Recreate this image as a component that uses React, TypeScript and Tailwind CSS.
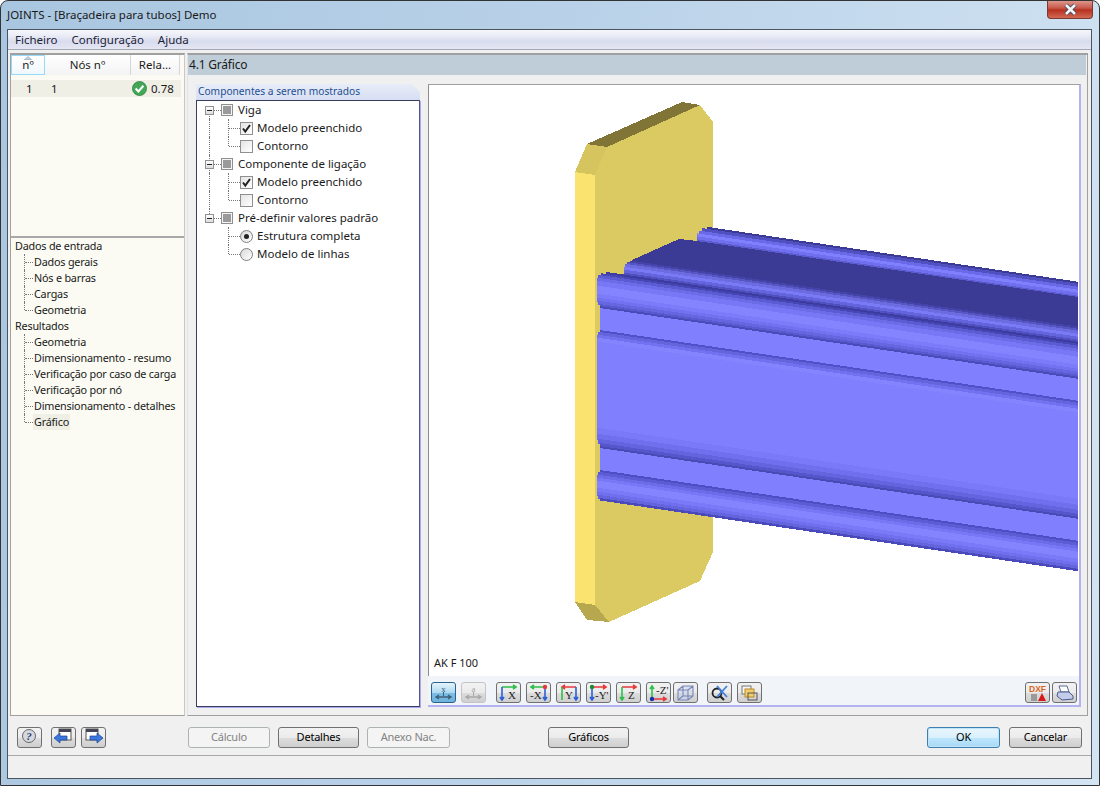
import type { ReactNode } from "react";

const font = "font-['Noto_Sans',sans-serif]";

// beam section: x where band starts, y at x=600 top/bottom, colour
const slope = 0.148;
const beamEnd = 1078;
const bands: [number, number, number, string][] = [
  [707, 211, 213, "#3b3b96"],
  [702, 213, 216, "#5050c0"],
  [699, 216, 219, "#6a6ae8"],
  [697, 219, 222, "#8080ff"],
  [697, 222, 225, "#7070ee"],
  [697, 225, 227, "#5c5cd0"],
  [630, 256, 258, "#4444a8"],
  [627, 258, 260, "#5656c4"],
  [625, 260, 263, "#6c6ce0"],
  [624, 263, 266, "#7a7af6"],
  [624, 266, 269, "#6464dc"],
  [624, 269, 271, "#5050c0"],
  [606, 271, 273, "#3c3ca0"],
  [601, 273, 275, "#4646b4"],
  [598, 275, 278, "#5c5cd2"],
  [597, 278, 281, "#6c6ce8"],
  [597, 281, 286, "#7878f6"],
  [597, 286, 294, "#8484ff"],
  [597, 294, 298, "#7c7cfa"],
  [597, 298, 301, "#7272f0"],
  [598, 301, 304, "#6666e0"],
  [600, 304, 306, "#5a5ad0"],
  [600, 306, 308, "#4a4ab8"],
  [600, 308, 330, "#8080ff"],
  [600, 330, 332, "#5050c8"],
  [598, 332, 335, "#6464dc"],
  [597, 335, 338, "#7272f0"],
  [597, 338, 342, "#8484ff"],
  [597, 342, 428, "#8080ff"],
  [597, 428, 434, "#7a7af8"],
  [597, 434, 439, "#7070ee"],
  [598, 439, 443, "#6464de"],
  [600, 443, 446, "#5656cc"],
  [600, 446, 448, "#4a4ab4"],
  [600, 448, 470, "#8080ff"],
  [600, 470, 472, "#4e4ec4"],
  [598, 472, 475, "#5c5cd4"],
  [597, 475, 478, "#6c6ce8"],
  [597, 478, 481, "#7878f6"],
  [597, 481, 488, "#8484ff"],
  [597, 488, 492, "#7a7af8"],
  [597, 492, 495, "#7070ee"],
  [598, 495, 498, "#6464dc"],
  [600, 498, 500.5, "#4a4abc"],
];

function Model() {
  return (
    <svg viewBox="429 85 650 591" className="absolute inset-0 w-full h-full" shapeRendering="crispEdges">
      <polygon points="575,172 595,175 595,605 575,602" fill="#fae36f" />
      <polygon points="575,172 587,144 607,147 595,175" fill="#d6c55e" />
      <polygon points="587,144 682,102 700,105 607,147" fill="#807536" />
      <polygon points="595,175 607,147 700,105 713,122 713,552 700,581 609,622 595,605" fill="#dbc962" />
      <polygon points="575,602 587,620 609,622 595,605" fill="#b7a84f" />
      <polygon points="632,260 679,239 697,241 1078,297 1078,335 632,270" fill="#3b3b96" />
      {bands.map(([x, a, b, c], i) => {
        const bottom = i < bands.length - 1 ? b + 1 : b;
        const run = beamEnd - 600;
        return (
          <polygon
            key={i}
            fill={c}
            points={`${x},${a + (x - 600) * slope} ${beamEnd},${a + run * slope} ${beamEnd},${bottom + run * slope} ${x},${bottom + (x - 600) * slope}`}
          />
        );
      })}
      <polygon points="697,241 1078,297 1078,325.5 632,260 679,239" fill="#3b3b96" />
    </svg>
  );
}

function Arrow({ d, c }: { d: string; c: string }) {
  return <path d={d} stroke={c} strokeWidth="1.6" fill="none" />;
}

function Letter({ x, y, t }: { x: number; y: number; t: string }) {
  return (
    <text x={x} y={y} fontSize="11" fontFamily="'Liberation Serif',serif" fill="#222">
      {t}
    </text>
  );
}

const R = "#e8383c";
const G = "#2fbf4a";
const B = "#2c5fd8";

const axisIcons: ReactNode[] = [
  <>
    <Arrow d="M4 3H18M15 1l3 2-3 2" c={G} />
    <Arrow d="M4 3V16M2 13l2 3 2-3" c={B} />
    <Letter x={10} y={15} t="X" />
  </>,
  <>
    <Arrow d="M17 3H3M6 1L3 3l3 2" c={G} />
    <Arrow d="M17 3V16M15 13l2 3 2-3" c={B} />
    <circle cx="17" cy="3" r="2.2" fill={R} />
    <Letter x={2} y={15} t="-X" />
  </>,
  <>
    <Arrow d="M18 3H4M7 1L4 3l3 2" c={R} />
    <Arrow d="M4 3V16" c={G} />
    <Arrow d="M18 3V16M16 13l2 3 2-3" c={B} />
    <Letter x={7} y={15} t="Y" />
  </>,
  <>
    <Arrow d="M4 3H18M15 1l3 2-3 2" c={R} />
    <Arrow d="M4 3V16M2 13l2 3 2-3" c={B} />
    <circle cx="4" cy="3" r="2.2" fill="#1d8a35" />
    <Letter x={7} y={15} t="-Y'" />
  </>,
  <>
    <Arrow d="M4 3H18M15 1l3 2-3 2" c={R} />
    <Arrow d="M4 3V16M2 13l2 3 2-3" c={G} />
    <Letter x={10} y={15} t="Z" />
  </>,
  <>
    <Arrow d="M4 15V2M2 5l2-3 2 3" c={G} />
    <Arrow d="M4 15H18M15 13l3 2-3 2" c={R} />
    <circle cx="4" cy="15" r="2.2" fill="#1a2fb0" />
    <Letter x={8} y={10} t="-Z'" />
  </>,
];

function IconButton({ children, active, className = "" }: { children: ReactNode; active?: boolean; className?: string }) {
  return (
    <div
      className={`w-[25px] h-[21px] shrink-0 flex items-center justify-center rounded-[3px] border ${
        active
          ? "border-[#2c628b] bg-[linear-gradient(#e5f4fc,#aedaf2_50%,#7cbde4_52%,#6fb3dd)]"
          : "border-[#707070] bg-[linear-gradient(#f2f2f2,#ebebeb_50%,#dddddd_52%,#cfcfcf)]"
      } ${className}`}
    >
      <svg width="21" height="18" viewBox="0 0 21 18">
        {children}
      </svg>
    </div>
  );
}

function DimIcon({ l, c }: { l: string; c: string }) {
  return (
    <>
      <text x="10.5" y="7.5" textAnchor="middle" fontSize="9" fontFamily="'Liberation Serif',serif" fill={c}>
        {l}
      </text>
      <path d="M10.5 8v4" stroke={c} />
      <path d="M3 13H18M6 11l-3 2 3 2M15 11l3 2-3 2" stroke={c} strokeWidth="1.4" fill="none" />
    </>
  );
}

function Btn({ label, disabled, primary, className = "" }: { label: string; disabled?: boolean; primary?: boolean; className?: string }) {
  const look = disabled
    ? "border-[#adb2b5] bg-[#f4f4f4] text-[#838383]"
    : primary
      ? "border-[#3c7fb1] bg-[linear-gradient(#eaf6fd,#d9f0fc_50%,#bee6fd_52%,#a7d9f5)] text-black shadow-[inset_0_0_0_1px_#bfe4f8]"
      : "border-[#707070] bg-[linear-gradient(#f2f2f2,#ebebeb_50%,#dddddd_52%,#cfcfcf)] text-black";
  return (
    <div className={`h-[21px] shrink-0 flex items-center justify-center rounded-[3px] border text-[11px] tracking-[-0.2px] ${look} ${className}`}>
      {label}
    </div>
  );
}

function SideItem({ label, last, selected }: { label: string; last?: boolean; selected?: boolean }) {
  return (
    <div className="h-4 flex items-center pl-[9px]">
      <div className={`relative w-[9px] shrink-0 self-start ${last ? "h-2" : "h-4"} border-l border-dotted border-[#777]`}>
        <div className="absolute left-0 top-2 w-[8px] border-t border-dotted border-[#777]" />
      </div>
      <span className={`px-px leading-4 whitespace-nowrap ${selected ? "bg-[#efefe6]" : ""}`}>{label}</span>
    </div>
  );
}

function TriBox() {
  return (
    <div className="w-[12px] h-[12px] shrink-0 border border-[#8e8f8f] bg-[#f4f4f4] flex items-center justify-center">
      <div className="w-[8px] h-[8px] bg-[#9a9a9a]" />
    </div>
  );
}

function Expander() {
  return (
    <div className="relative z-10 w-[9px] h-[9px] shrink-0 border border-[#919191] bg-[linear-gradient(#fff,#dcdcdc)] flex items-center justify-center">
      <div className="w-[5px] h-px bg-[#222]" />
    </div>
  );
}

function Check({ on }: { on?: boolean }) {
  return (
    <div className="w-[13px] h-[13px] shrink-0 border border-[#8e8f8f] bg-[linear-gradient(135deg,#e4e4e4,#fff)] flex items-center justify-center">
      {on && (
        <svg width="11" height="11" viewBox="0 0 11 11">
          <path d="M2 5.5L4.3 8.5 9 2" stroke="#222" strokeWidth="2" fill="none" />
        </svg>
      )}
    </div>
  );
}

function Radio({ on }: { on?: boolean }) {
  return (
    <div className="w-[13px] h-[13px] shrink-0 rounded-full border border-[#7f7f7f] bg-[linear-gradient(135deg,#d8d8d8,#fff)] flex items-center justify-center">
      {on && <div className="w-[5px] h-[5px] rounded-full bg-[#222]" />}
    </div>
  );
}

function ParentRow({ label, first, last }: { label: string; first?: boolean; last?: boolean }) {
  return (
    <div className="relative h-[18px] flex items-center pl-[8px]">
      {!last && <div className={`absolute left-[12px] ${first ? "top-[9px]" : "top-0"} bottom-0 border-l border-dotted border-[#777]`} />}
      {last && <div className="absolute left-[12px] top-0 h-[9px] border-l border-dotted border-[#777]" />}
      <Expander />
      <div className="w-[7px] border-t border-dotted border-[#777]" />
      <TriBox />
      <span className="ml-[5px]">{label}</span>
    </div>
  );
}

function ChildRow({ label, control, elbowEnd, noGuide }: { label: string; control: ReactNode; elbowEnd?: boolean; noGuide?: boolean }) {
  return (
    <div className="relative h-[18px] flex items-center pl-[31px]">
      {!noGuide && <div className="absolute left-[12px] top-0 bottom-0 border-l border-dotted border-[#777]" />}
      <div className={`relative self-start w-[12px] ${elbowEnd ? "h-[9px]" : "h-[18px]"} border-l border-dotted border-[#777]`}>
        <div className="absolute left-0 top-[9px] w-[11px] border-t border-dotted border-[#777]" />
      </div>
      {control}
      <span className="ml-[4px]">{label}</span>
    </div>
  );
}

export default function App() {
  return (
    <div className={`${font} text-[11.5px] text-[#1a1a1a] w-[1100px] h-[786px] overflow-hidden rounded-t-[8px] border border-[#333] bg-[linear-gradient(100deg,#a9c6e0_0%,#b8d1e8_45%,#d3e4f3_100%)] flex flex-col px-[6px]`}>
      {/* title bar */}
      <div className="h-[28px] shrink-0 flex w-[1085px]">
        <span className="text-[11.5px] pt-[5px]">JOINTS - [Braçadeira para tubos] Demo</span>
        <div className="ml-auto mr-[-1px] w-[46px] h-[19px] -mt-px rounded-b-[4px] border border-t-0 border-[#7a3a34] bg-[linear-gradient(#e0a094,#c8584a_45%,#b8301f_55%,#d06a55)] flex items-center justify-center">
          <svg width="15" height="13" viewBox="0 0 15 13">
            <path d="M3 2L12 11M12 2L3 11" stroke="#3c4a5c" strokeWidth="4.4" />
            <path d="M3 2L12 11M12 2L3 11" stroke="#f4f6f8" strokeWidth="2.6" />
          </svg>
        </div>
      </div>

      {/* client area */}
      <div className="w-[1085px] h-[750px] shrink-0 border border-[#4a5560] bg-[#f0f0f0] flex flex-col">
        <div className="h-[20px] shrink-0 flex items-center gap-[14px] pl-[7px] border-b border-[#a4a7b4] bg-[linear-gradient(#f6f7fb,#eceef7_25%,#d9dcee_60%,#e4e6f3)] text-[#1c2436]">
          <span>Ficheiro</span>
          <span>Configuração</span>
          <span>Ajuda</span>
        </div>

        <div className="h-[666px] shrink-0 flex pt-[3px] pl-[2px]">
          {/* left panel */}
          <div className="w-[175px] shrink-0 flex flex-col border-l border-r border-b border-t-2 border-[#a0a0a0] border-r-[#c8c8c8] bg-[#fbfbf3]">
            <div className="h-[181px] shrink-0">
              <div className="h-[20px] flex">
                <div className="relative w-[34px] flex items-end justify-center border border-[#96d9f9] bg-[linear-gradient(#fff,#f0f8fd)] leading-[18px]">
                  <svg className="absolute top-0 left-[12px]" width="8" height="4" viewBox="0 0 8 4">
                    <path d="M4 0.5L7.5 3.5H0.5Z" fill="#c4d3de" stroke="#8aa0b0" strokeWidth="0.6" />
                  </svg>
                  nº
                </div>
                <div className="w-[86px] flex items-center justify-center border-r border-[#d5d5d5] bg-[linear-gradient(#fff,#f3f3f3)]">Nós nº</div>
                <div className="w-[49px] flex items-center justify-center border-r border-[#d5d5d5] bg-[linear-gradient(#fff,#f3f3f3)]">Rela...</div>
              </div>
              <div className="mt-[5px] h-[17px] w-[170px] flex items-center bg-[#efefe6]">
                <span className="ml-[15px] w-[25px]">1</span>
                <span className="w-[81px]">1</span>
                <svg width="15" height="15" viewBox="0 0 15 15">
                  <circle cx="7.5" cy="7.5" r="7" fill="#44a757" stroke="#2e7d3e" strokeWidth="0.8" />
                  <path d="M3.6 7.6L6.4 10.4 11.4 4.8" stroke="#fff" strokeWidth="2.1" fill="none" />
                </svg>
                <span className="ml-[4px]">0.78</span>
              </div>
            </div>
            <div className="flex-1 border-t-2 border-[#a8a8a8] pl-[4px] text-[10.8px] tracking-[-0.2px]">
              <div className="h-4 leading-4">Dados de entrada</div>
              <SideItem label="Dados gerais" />
              <SideItem label="Nós e barras" />
              <SideItem label="Cargas" />
              <SideItem label="Geometria" last />
              <div className="h-4 leading-4">Resultados</div>
              <SideItem label="Geometria" />
              <SideItem label="Dimensionamento - resumo" />
              <SideItem label="Verificação por caso de carga" />
              <SideItem label="Verificação por nó" />
              <SideItem label="Dimensionamento - detalhes" />
              <SideItem label="Gráfico" last selected />
            </div>
          </div>

          {/* right panel */}
          <div className="ml-[2px] w-[901px] shrink-0 flex flex-col border-t-2 border-r border-b border-l border-[#a0a0a0] border-l-[#e4e4e4]">
            <div className="h-[20px] shrink-0 flex items-center pl-[1px] mr-[1px] bg-[#bfcdd8] text-[12px] tracking-[-0.2px]">4.1 Gráfico</div>
            <div className="flex-1 flex pl-[8px] pt-[9px] pb-[8px] gap-[8px]">
              {/* component tree */}
              <div className="w-[224px] shrink-0 flex flex-col">
                <div className="h-[16px] shrink-0 pl-[2px] flex items-center text-[10.2px] text-[#1f4f8f] bg-[linear-gradient(#e7ecf8,#d6dff3)] [clip-path:polygon(0_0,calc(100%-8px)_0,100%_8px,100%_100%,0_100%)]">
                  Componentes a serem mostrados
                </div>
                <div className="flex-1 border border-[#3c3c5c] border-r-[#55558c] bg-white shadow-[1px_1px_0_#a9a9ee]">
                  <ParentRow label="Viga" first />
                  <ChildRow label="Modelo preenchido" control={<Check on />} />
                  <ChildRow label="Contorno" control={<Check />} elbowEnd />
                  <ParentRow label="Componente de ligação" />
                  <ChildRow label="Modelo preenchido" control={<Check on />} />
                  <ChildRow label="Contorno" control={<Check />} elbowEnd />
                  <ParentRow label="Pré-definir valores padrão" last />
                  <ChildRow label="Estrutura completa" control={<Radio on />} noGuide />
                  <ChildRow label="Modelo de linhas" control={<Radio />} elbowEnd noGuide />
                </div>
              </div>

              {/* graphic */}
              <div className="w-[653px] shrink-0 flex flex-col border-t border-[#a0a0a0] border-r-2 border-b-2 border-r-[#b3b3f0] border-b-[#b3b3f0] bg-[#f1f5fa]">
                <div className="relative flex-1 border-l border-[#8c8c8c] bg-white flex items-end">
                  <Model />
                  <span className="relative pl-[5px] pb-[5px] text-[11px]">AK F 100</span>
                </div>
                <div className="h-[29px] shrink-0 flex items-start pl-[3px] pr-[2px] pt-[6px]">
                  <IconButton active>
                    <DimIcon l="x" c="#3e5f7a" />
                  </IconButton>
                  <IconButton className="ml-[5px] border-[#c4c4c4]! bg-[#f4f4f4]!">
                    <DimIcon l="a" c="#a8a8a8" />
                  </IconButton>
                  <div className="ml-[10px] flex gap-[5px]">
                    {axisIcons.map((ic, i) => (
                      <IconButton key={i}>{ic}</IconButton>
                    ))}
                  </div>
                  <IconButton className="ml-[2px]">
                    <path d="M3 6L8 2H18V12L13 16H3ZM3 6H13V16M13 6L18 2M8 2V12H18M8 12L3 16" stroke="#7788b8" strokeWidth="1.1" fill="#c9d3ea" fillOpacity="0.6" />
                  </IconButton>
                  <IconButton className="ml-[9px]">
                    <circle cx="8" cy="9" r="4.5" stroke="#222" strokeWidth="1.8" fill="none" />
                    <path d="M11 12L15 16" stroke="#222" strokeWidth="2.2" />
                    <path d="M8 2L18 13M18 2L8 13" stroke="#3f7fe0" strokeWidth="1.8" />
                  </IconButton>
                  <IconButton className="ml-[5px]">
                    <rect x="3" y="2" width="9" height="8" fill="#f5f5f5" stroke="#777" />
                    <rect x="6" y="5" width="9" height="8" fill="#f2cf6a" stroke="#b98a2a" />
                    <rect x="9" y="9" width="9" height="7" fill="none" stroke="#555" />
                  </IconButton>
                  <IconButton className="ml-auto">
                    <text x="10.5" y="8" textAnchor="middle" fontSize="8.5" fontWeight="700" fontFamily="'Liberation Sans',sans-serif" fill="#d9661f">
                      DXF
                    </text>
                    <rect x="4" y="10" width="6" height="7" fill="#9a9a9a" />
                    <path d="M15 9L19 17H11Z" fill="#d81818" />
                  </IconButton>
                  <IconButton className="ml-[2px]">
                    <path d="M5 2H13L15 8H7Z" fill="#fff" stroke="#5a6a98" />
                    <path d="M4 8L15 8L19 12V15L8 16L3 12Z" fill="#c3cdeb" stroke="#4a5a8c" />
                  </IconButton>
                </div>
              </div>
            </div>
          </div>
        </div>

        {/* bottom buttons */}
        <div className="h-[40px] shrink-0 flex items-center pl-[9px] pt-[3px] border-b border-[#a8a8a8]">
          <IconButton>
            <circle cx="10" cy="8" r="6.5" fill="#d4d8e0" stroke="#666" />
            <text x="10" y="12" textAnchor="middle" fontSize="11" fontWeight="700" fontStyle="italic" fontFamily="'Liberation Serif',serif" fill="#2c3a6a">?</text>
          </IconButton>
          <IconButton className="ml-[9px]">
            <rect x="6" y="1" width="12" height="11" fill="#fff" stroke="#555" />
            <rect x="6" y="1" width="12" height="3" fill="#445" />
            <path d="M1 10L7 5V8H14V12H7V15Z" fill="#3a78e0" stroke="#1e3f90" strokeWidth="0.7" />
          </IconButton>
          <IconButton className="ml-[5px]">
            <rect x="3" y="1" width="12" height="11" fill="#fff" stroke="#555" />
            <rect x="3" y="1" width="12" height="3" fill="#445" />
            <path d="M20 10L14 5V8H7V12H14V15Z" fill="#3a78e0" stroke="#1e3f90" strokeWidth="0.7" />
          </IconButton>
          <Btn label="Cálculo" disabled className="ml-[82px] w-[82px]" />
          <Btn label="Detalhes" className="ml-[8px] w-[81px]" />
          <Btn label="Anexo Nac." disabled className="ml-[8px] w-[83px]" />
          <Btn label="Gráficos" className="ml-[98px] w-[81px]" />
          <Btn label="OK" primary className="ml-[298px] w-[73px]" />
          <Btn label="Cancelar" className="ml-[9px] w-[73px]" />
        </div>
        <div className="flex-1" />
      </div>
    </div>
  );
}
